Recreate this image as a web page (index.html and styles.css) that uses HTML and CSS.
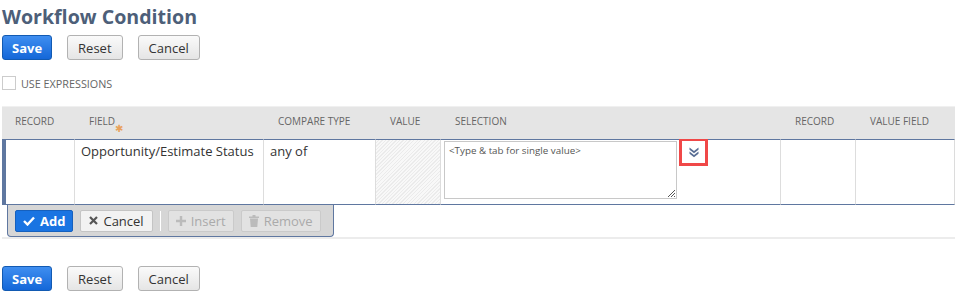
FILE: index.html
```html
<!DOCTYPE html>
<html lang="en">
<head>
    <meta charset="UTF-8">
    <title>Workflow Condition</title>
    <link rel="stylesheet" href="styles.css">
</head>
<body>
    <h1 class="page-title">Workflow Condition</h1>
    <div class="button-bar">
        <button class="btn btn-primary">Save</button>
        <button class="btn">Reset</button>
        <button class="btn">Cancel</button>
    </div>

    <label class="check-row">
        <span class="checkbox"></span>
        <span class="check-label">Use Expressions</span>
    </label>

    <div class="machine">
        <div class="machine-grid">
            <div class="head-cell head-first">Record</div>
            <div class="head-cell">Field<span class="required">&#10033;</span></div>
            <div class="head-cell">Compare Type</div>
            <div class="head-cell">Value</div>
            <div class="head-cell">Selection</div>
            <div class="head-cell">Record</div>
            <div class="head-cell">Value Field</div>

            <div class="row-bar"></div>
            <div class="cell"></div>
            <div class="cell">Opportunity/Estimate Status</div>
            <div class="cell">any of</div>
            <div class="cell cell-disabled"></div>
            <div class="cell cell-selection">
                <div class="selection-box">&lt;Type &amp; tab for single value&gt;
                    <svg class="resize-grip" width="8" height="8" viewBox="0 0 8 8">
                        <path d="M8 1 L1 8 M8 4 L4 8 M8 7 L7 8" stroke="#555" stroke-width="1"/>
                    </svg>
                </div>
                <span class="expand-btn">
                    <svg width="12" height="12" viewBox="0 0 12 12">
                        <path d="M1.5 1.5 L6 5 L10.5 1.5 L10.5 3.8 L6 7.3 L1.5 3.8 Z" fill="#5a6f95"/>
                        <path d="M1.5 5.5 L6 9 L10.5 5.5 L10.5 7.8 L6 11.3 L1.5 7.8 Z" fill="#5a6f95"/>
                    </svg>
                </span>
            </div>
            <div class="cell"></div>
            <div class="cell cell-last"></div>
        </div>

        <div class="row-toolbar">
            <button class="tbtn tbtn-add">
                <svg width="12" height="10" viewBox="0 0 12 10"><path d="M1 5 L4.5 8.5 L11 1.5" stroke="#fff" stroke-width="2.4" fill="none"/></svg>
                Add
            </button>
            <button class="tbtn">
                <svg width="9" height="9" viewBox="0 0 9 9"><path d="M1 1 L8 8 M8 1 L1 8" stroke="#555" stroke-width="2.2"/></svg>
                Cancel
            </button>
            <span class="tool-sep"></span>
            <button class="tbtn tbtn-off">
                <svg width="10" height="10" viewBox="0 0 10 10"><path d="M5 0 V10 M0 5 H10" stroke="#bbb" stroke-width="2.4"/></svg>
                Insert
            </button>
            <button class="tbtn tbtn-off">
                <svg width="10" height="12" viewBox="0 0 10 12"><path d="M0 1.5 H10 V3 H0 Z M3.5 0 H6.5 V1.5 H3.5 Z M1 3.5 H9 L8.3 12 H1.7 Z" fill="#bbb"/></svg>
                Remove
            </button>
        </div>
    </div>

    <div class="button-bar bottom-bar">
        <button class="btn btn-primary">Save</button>
        <button class="btn">Reset</button>
        <button class="btn">Cancel</button>
    </div>
</body>
</html>
```

FILE: styles.css
```css
body {
    font-family: "Open Sans", Arial, sans-serif;
    background-color: #fff;
    margin: 0;
    padding: 0 0 0 2px;
    color: #333;
}

.page-title {
    font-size: 19.6px;
    font-weight: bold;
    color: #4d5f79;
    margin: 0;
    padding-top: 3px;
    line-height: 28px;
}

.button-bar {
    display: flex;
    gap: 15px;
    margin-top: 4px;
}

.btn {
    font-family: inherit;
    font-size: 13px;
    height: 25px;
    padding: 0 10px;
    border: 1px solid #b2b2b2;
    border-radius: 3px;
    background: linear-gradient(#fafafa, #e5e5e5);
    color: #333;
    cursor: pointer;
}

.btn-primary {
    background: linear-gradient(#3f8ef0, #1467d8);
    border-color: #125ab2;
    color: #fff;
    font-weight: bold;
    padding: 0 9px;
}

.check-row {
    display: flex;
    align-items: flex-end;
    gap: 5px;
    margin-top: 14px;
    height: 16px;
}

.checkbox {
    width: 12px;
    height: 12px;
    border: 1px solid #ccc;
    background-color: #fff;
}

.check-label {
    font-size: 10.8px;
    color: #666;
    text-transform: uppercase;
    line-height: 12px;
}

.machine {
    margin-top: 16px;
    width: 953px;
    border-top: 1px solid #f0f0f0;
    border-bottom: 2px solid #ececec;
}

.machine-grid {
    display: grid;
    grid-template-columns: 4px 69px 189px 112px 65px 340px 75px 99px;
}

.head-cell {
    background-color: #e5e5e5;
    height: 32px;
    padding: 7px 0 0 14px;
    box-sizing: border-box;
    font-size: 10px;
    color: #666;
    text-transform: uppercase;
    position: relative;
}

.head-first {
    grid-column: span 2;
    padding-left: 13px;
}

.required {
    position: absolute;
    left: 40px;
    top: 14px;
    color: #e8a25c;
    font-size: 10px;
}

.row-bar {
    background-color: #5f77a0;
}

.cell {
    height: 66px;
    box-sizing: border-box;
    border-top: 1px solid #5f77a0;
    border-bottom: 1px solid #5f77a0;
    border-right: 1px solid #ddd;
    padding: 2px 6px;
    font-size: 13px;
    color: #333;
    line-height: 18px;
}

.cell-disabled {
    background: repeating-linear-gradient(135deg, #f8f8f8 0, #f8f8f8 1.5px, #ebebeb 1.5px, #ebebeb 2.5px);
}

.cell-selection {
    display: flex;
    align-items: flex-start;
    padding: 1px 3px;
}

.selection-box {
    position: relative;
    width: 233px;
    height: 58px;
    box-sizing: border-box;
    border: 1px solid #c8c8c8;
    padding: 2px 4px;
    font-size: 9.8px;
    line-height: 14px;
    color: #555;
    flex-shrink: 0;
}

.resize-grip {
    position: absolute;
    right: 1px;
    bottom: 1px;
}

.expand-btn {
    margin-left: 2px;
    margin-top: -3px;
    width: 29px;
    height: 28px;
    box-sizing: border-box;
    border: 3px solid #f04848;
    display: flex;
    align-items: center;
    justify-content: center;
}

.cell-last {
    border-right: 1px solid #dcdcdc;
}

.row-toolbar {
    display: flex;
    align-items: center;
    gap: 7px;
    margin-left: 5px;
    width: 327px;
    height: 32px;
    box-sizing: border-box;
    padding: 0 0 0 7px;
    background-color: #d6d6d6;
    border: 1px solid #5f77a0;
    border-top: none;
    border-radius: 0 0 4px 4px;
}

.tbtn {
    font-family: inherit;
    font-size: 13px;
    height: 22px;
    padding: 0 8px;
    display: flex;
    align-items: center;
    gap: 5px;
    border: 1px solid #c4c4c4;
    border-radius: 2px;
    background-color: #f2f2f2;
    color: #333;
}

.tbtn-add {
    background-color: #1a74e2;
    border-color: #1660bd;
    color: #fff;
    font-weight: bold;
    padding: 0 7px;
}

.tbtn-off {
    background-color: #e2e2e2;
    color: #aaa;
    border-color: #cacaca;
    padding: 0 7px;
}

.tool-sep {
    width: 1px;
    height: 20px;
    background-color: #fff;
}

.bottom-bar {
    margin-top: 27px;
}
```
